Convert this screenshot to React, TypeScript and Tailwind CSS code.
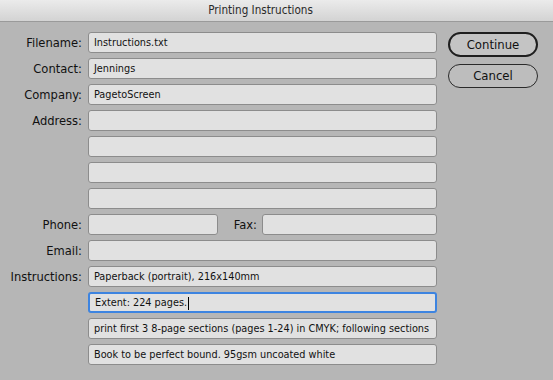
import React from 'react';

const font = { fontFamily: '"DejaVu Sans Condensed", "DejaVu Sans", "Liberation Sans", sans-serif' };

const Field = ({ value = '', focused = false, className = '' }: { value?: string; focused?: boolean; className?: string }) => (
  <div
    className={`h-[21px] rounded-[3px] bg-[#e1e1e1] flex items-center pl-[5px] pt-[1px] overflow-hidden whitespace-nowrap text-[10.8px] text-[#111] ${
      focused ? 'border-2 border-[#3d84e0] pl-[4px]' : 'border border-[#8c8c8c]'
    } ${className}`}
  >
    <span>{value}</span>
    {focused && <span className="ml-[1px] inline-block w-[1px] h-[13px] bg-black" />}
  </div>
);

const Label = ({ children }: { children?: React.ReactNode }) => (
  <div className="h-[21px] flex items-center justify-end text-[12.8px] text-[#111]">{children}</div>
);

export default function App() {
  const rows: [string, string][] = [
    ['Filename:', 'Instructions.txt'],
    ['Contact:', 'Jennings'],
    ['Company:', 'PagetoScreen'],
    ['Address:', ''],
    ['', ''],
    ['', ''],
    ['', ''],
  ];

  return (
    <div className="w-[553px] h-[380px] bg-[#b6b6b6] flex flex-col" style={font}>
      <div className="h-[22px] shrink-0 bg-gradient-to-b from-[#ebebeb] to-[#d3d3d3] border-b border-[#9a9a9a] flex items-center justify-center pr-[32px] text-[11.6px] text-[#2a2a2a]">
        Printing Instructions
      </div>
      <div className="flex pt-[10px]">
        <div className="grid grid-cols-[82px_349px] gap-x-[6px] gap-y-[5px] content-start">
          {rows.map(([label, value], i) => (
            <React.Fragment key={i}>
              <Label>{label}</Label>
              <Field value={value} />
            </React.Fragment>
          ))}
          <Label>Phone:</Label>
          <div className="flex items-center">
            <Field className="w-[130px]" />
            <div className="flex-1 text-right pr-[5px] text-[12.8px] text-[#111]">Fax:</div>
            <Field className="w-[175px]" />
          </div>
          <Label>Email:</Label>
          <Field />
          <Label>Instructions:</Label>
          <Field value="Paperback (portrait), 216x140mm" />
          <Label />
          <Field value="Extent: 224 pages." focused />
          <Label />
          <Field value="print first 3 8-page sections (pages 1-24) in CMYK; following sections" />
          <Label />
          <Field value="Book to be perfect bound. 95gsm uncoated white" />
        </div>
        <div className="ml-[11px] flex flex-col gap-[7px]">
          <button className="w-[90px] h-[25px] rounded-full border-2 border-[#1f1f1f] bg-[#c4c4c4] text-[13px] text-[#111]">
            Continue
          </button>
          <button className="w-[90px] h-[24px] rounded-full border border-[#2a2a2a] bg-[#bdbdbd] text-[13px] text-[#111]">
            Cancel
          </button>
        </div>
      </div>
    </div>
  );
}
